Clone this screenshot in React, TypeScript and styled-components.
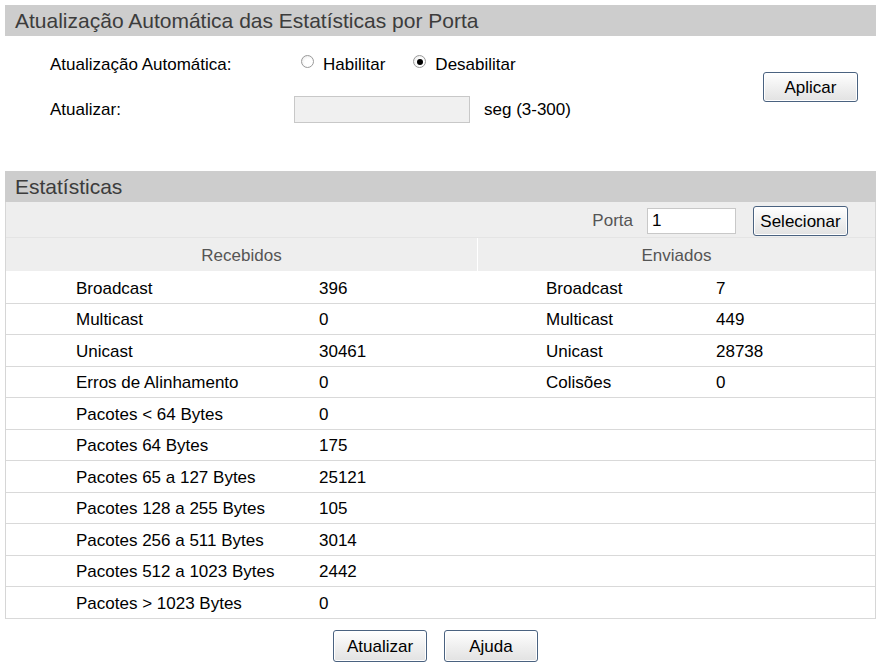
import React from 'react';
import styled, { createGlobalStyle } from 'styled-components';

const GlobalStyle = createGlobalStyle`
    body {
        margin: 0;
        background: #fff;
        font-family: "Liberation Sans", Arial, sans-serif;
        font-size: 17px;
        color: #000;
    }
`

const received = [
    ['Broadcast', '396'],
    ['Multicast', '0'],
    ['Unicast', '30461'],
    ['Erros de Alinhamento', '0'],
    ['Pacotes < 64 Bytes', '0'],
    ['Pacotes 64 Bytes', '175'],
    ['Pacotes 65 a 127 Bytes', '25121'],
    ['Pacotes 128 a 255 Bytes', '105'],
    ['Pacotes 256 a 511 Bytes', '3014'],
    ['Pacotes 512 a 1023 Bytes', '2442'],
    ['Pacotes > 1023 Bytes', '0'],
];

const sent = [
    ['Broadcast', '7'],
    ['Multicast', '449'],
    ['Unicast', '28738'],
    ['Colisões', '0'],
];

const App = () => {
    return (
    <>
    <GlobalStyle/>
    <Page>
        <SectionTitle>Atualização Automática das Estatísticas por Porta</SectionTitle>
        <AutoPanel>
            <FormGrid>
                <div>Atualização Automática:</div>
                <RadioGroup>
                    <RadioItem><Radio/>Habilitar</RadioItem>
                    <RadioItem><Radio $checked/>Desabilitar</RadioItem>
                </RadioGroup>
                <div>Atualizar:</div>
                <InputRow>
                    <SecInput disabled/>
                    <span>seg (3-300)</span>
                </InputRow>
            </FormGrid>
            <ApplyWrap>
                <Button $w={95}>Aplicar</Button>
            </ApplyWrap>
        </AutoPanel>

        <SectionTitle $top>Estatísticas</SectionTitle>
        <StatsBox>
            <PortBar>
                <GreyText>Porta</GreyText>
                <PortInput defaultValue="1"/>
                <Button $w={95}>Selecionar</Button>
            </PortBar>
            <HeadRow>
                <HeadCell>Recebidos</HeadCell>
                <HeadCell>Enviados</HeadCell>
            </HeadRow>
            {received.map((r, i) => (
                <DataRow key={r[0]}>
                    <Half $pad={70} $label={243}>
                        <span>{r[0]}</span>
                        <span>{r[1]}</span>
                    </Half>
                    <Half $pad={68} $label={170}>
                        <span>{sent[i] ? sent[i][0] : ''}</span>
                        <span>{sent[i] ? sent[i][1] : ''}</span>
                    </Half>
                </DataRow>
            ))}
        </StatsBox>
        <Footer>
            <Button $w={94} $h={32}>Atualizar</Button>
            <Button $w={94} $h={32}>Ajuda</Button>
        </Footer>
    </Page>
    </>
    );
};

export default App;

const Page = styled.div`
    width: 871px;
    padding: 5px 5px 0 5px;
`

const SectionTitle = styled.div<{ $top?: boolean }>`
    background: #cdcdcd;
    color: #3c3c3c;
    height: 31px;
    line-height: 31px;
    padding-left: 10px;
    font-size: 21px;
    margin-top: ${p => (p.$top ? '39px' : '0')};
`

const AutoPanel = styled.div`
    display: flex;
    justify-content: space-between;
    padding: 6px 18px 0 45px;
`

const FormGrid = styled.div`
    display: grid;
    grid-template-columns: 244px auto;
    grid-auto-rows: 45px;
    align-items: center;
`

const RadioGroup = styled.div`
    display: flex;
    gap: 28px;
    padding-left: 7px;
`

const RadioItem = styled.label`
    display: flex;
    align-items: center;
    gap: 9px;
`

const Radio = styled.span<{ $checked?: boolean }>`
    width: 11px;
    height: 11px;
    margin-top: -6px;
    border-radius: 50%;
    border: 1px solid #9a9a9a;
    background: radial-gradient(circle at 60% 60%, #ffffff 40%, #e4e4e4 100%);
    position: relative;
    &::after {
        content: '';
        display: ${p => (p.$checked ? 'block' : 'none')};
        position: absolute;
        left: 2.5px;
        top: 2.5px;
        width: 6px;
        height: 6px;
        border-radius: 50%;
        background: #000;
    }
`

const InputRow = styled.div`
    display: flex;
    align-items: center;
    gap: 14px;
`

const SecInput = styled.input`
    width: 176px;
    height: 27px;
    box-sizing: border-box;
    border: 1px solid #c8c8c8;
    background: #f0f0f0;
    font: inherit;
`

const ApplyWrap = styled.div`
    padding-top: 30px;
`

const Button = styled.button<{ $w: number; $h?: number }>`
    width: ${p => p.$w}px;
    height: ${p => p.$h ?? 30}px;
    border: 1px solid #4a6280;
    border-radius: 3px;
    background: linear-gradient(#ffffff, #f0f0f0 50%, #e2e2e2);
    font-family: "Liberation Sans", Arial, sans-serif;
    font-size: 17px;
    color: #000;
    padding: 2px 0 0;
    box-shadow: inset 0 0 0 1px #fff;
`

const StatsBox = styled.div`
    border-left: 1px solid #d6d6d6;
    border-right: 1px solid #d6d6d6;
`

const PortBar = styled.div`
    background: #eeeeee;
    height: 35px;
    box-sizing: border-box;
    padding-top: 2px;
    display: flex;
    align-items: center;
    justify-content: flex-end;
    padding-right: 27px;
    > span { margin-right: 14px; }
    > input { margin-right: 17px; }
`

const GreyText = styled.span`
    color: #555;
`

const PortInput = styled.input`
    width: 89px;
    height: 26px;
    box-sizing: border-box;
    border: 1px solid #c8c8c8;
    background: #fff;
    font: inherit;
    padding-left: 4px;
`

const HeadRow = styled.div`
    display: grid;
    grid-template-columns: 471px 1fr;
    gap: 1px;
    background: #fff;
    height: 33px;
    border-top: 1px solid #e4e4e4;
    border-bottom: 1px solid #fff;
`

const HeadCell = styled.div`
    background: #eeeeee;
    color: #555;
    display: flex;
    align-items: center;
    justify-content: center;
    padding-top: 2px;
`

const DataRow = styled.div`
    display: grid;
    grid-template-columns: 472px 1fr;
    height: 31.5px;
    box-sizing: border-box;
    border-bottom: 1px solid #d9d9d9;
`

const Half = styled.div<{ $pad: number; $label: number }>`
    display: grid;
    grid-template-columns: ${p => p.$label}px 1fr;
    padding-left: ${p => p.$pad}px;
    padding-top: 3px;
    align-items: center;
`

const Footer = styled.div`
    display: flex;
    justify-content: center;
    gap: 17px;
    padding-top: 11px;
    padding-right: 10px;
`
